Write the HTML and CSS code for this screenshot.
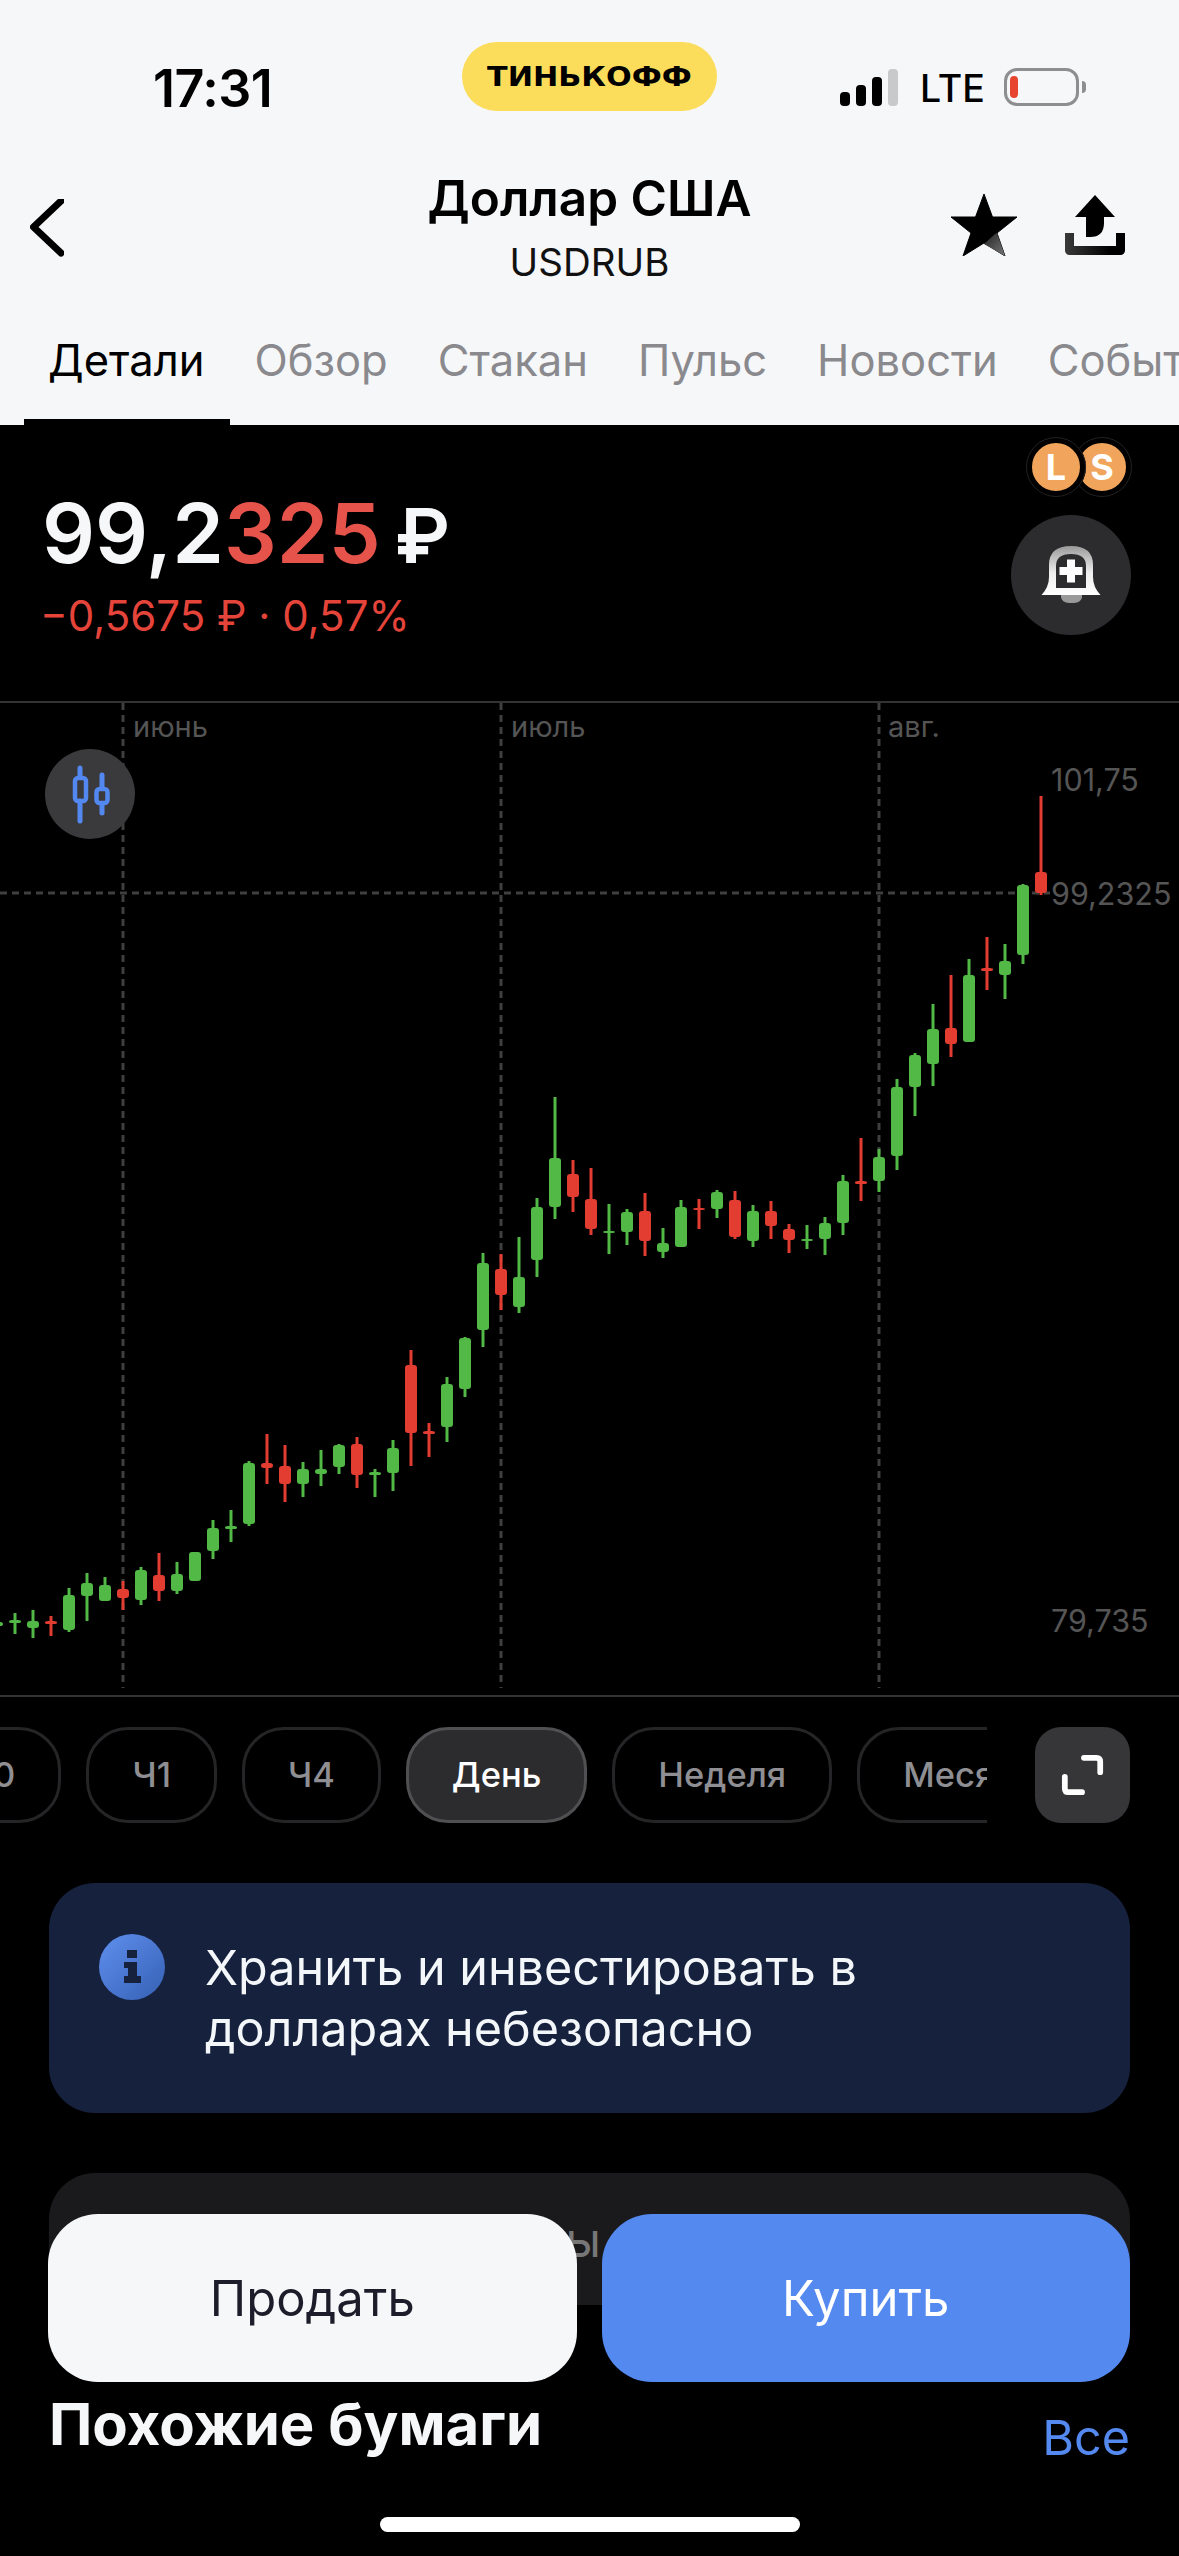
FILE: index.html
```html
<!DOCTYPE html>
<html>
  <head>
    <meta charset="UTF-8">
    <title>Доллар США</title>
    <link rel="stylesheet" href="styles.css">
  </head>

  <body>
    <div id="app">
      <div class="header">
        <div class="status">
          <div class="status__time">17:31</div>
          <div class="status__logo"><span>ТИНЬКОФФ</span></div>
          <div class="status__right">
            <div class="signal">
              <i class="signal__bar signal__bar--1"></i>
              <i class="signal__bar signal__bar--2"></i>
              <i class="signal__bar signal__bar--3"></i>
              <i class="signal__bar signal__bar--4"></i>
            </div>
            <div class="status__net">LTE</div>
            <div class="battery">
              <div class="battery__level"></div>
            </div>
            <div class="battery__nub"></div>
          </div>
        </div>

        <div class="nav">
          <div class="nav__left">
            <svg width="34" height="58" viewBox="0 1 34 58">
              <path d="M31 3 L3.5 29 L31 55" fill="none" stroke="#000" stroke-width="7" stroke-linecap="round" stroke-linejoin="round"/>
            </svg>
          </div>
          <div class="nav__title">
            <div class="nav__name">Доллар США</div>
            <div class="nav__ticker">USDRUB</div>
          </div>
          <div class="nav__actions">
            <svg width="66" height="62" viewBox="951 195 66 62">
              <defs>
                <linearGradient id="starLeg" x1="0" y1="0" x2="1" y2="1">
                  <stop offset="0" stop-color="#222"/>
                  <stop offset="1" stop-color="#777"/>
                </linearGradient>
              </defs>
              <path d="M984 195 L992.500 218 L1017 218 L997 234 L1005 257 L984 244 L963 257 L971 234 L951 218 L975.500 218 Z" fill="#000" stroke="#000" stroke-width="1" stroke-linejoin="round"/>
              <path d="M984 245 L995 235 L997 234 L1005 257 Z" fill="url(#starLeg)"/>
            </svg>
            <svg width="60" height="60" viewBox="1065 194 60 60">
              <defs>
                <linearGradient id="trayFade" gradientUnits="userSpaceOnUse" x1="1065" y1="0" x2="1110" y2="0">
                  <stop offset="0" stop-color="#3a3a3a"/>
                  <stop offset="1" stop-color="#000"/>
                </linearGradient>
              </defs>
              <path d="M1095 194 L1115 216 H1104 V222 Q1104 236 1090 236 H1086 V216 H1075 Z" fill="#000"/>
              <path d="M1069.500 232 V249.500 H1120.500 V232" fill="none" stroke="url(#trayFade)" stroke-width="9" stroke-linejoin="round"/>
            </svg>
          </div>
        </div>

        <div class="tabs">
          <div class="tab tab--active">Детали</div>
          <div class="tab">Обзор</div>
          <div class="tab">Стакан</div>
          <div class="tab">Пульс</div>
          <div class="tab">Новости</div>
          <div class="tab">События</div>
        </div>
      </div>

      <div class="quote">
        <div class="quote__left">
          <div class="price">99,2<span class="price__red">325</span><span class="price__cur">₽</span></div>
          <div class="change">−0,5675 ₽ · 0,57%</div>
        </div>
        <div class="quote__right">
          <div class="badges">
            <div class="badge badge--long">L</div>
            <div class="badge badge--short">S</div>
          </div>
          <div class="bell">
            <svg width="60" height="60" viewBox="1041 546 60 60">
              <defs>
                <linearGradient id="bellFade" x1="0" y1="0" x2="0" y2="1">
                  <stop offset="0" stop-color="#9a9a9a"/>
                  <stop offset="0.55" stop-color="#eee"/>
                  <stop offset="1" stop-color="#fff"/>
                </linearGradient>
              </defs>
              <path d="M1061 596 H1082 V598 A8 6 0 0 1 1074 604 H1069 A8 6 0 0 1 1061 598 Z" fill="#999"/>
              <path d="M1041.500 596 Q1049 588 1049 578 V566 Q1049 547 1071 547 Q1093 547 1093 566 V578 Q1093 588 1100.500 596 Z" fill="url(#bellFade)"/>
              <path d="M1056 589 Q1056 586 1056 578 V567 Q1056 555 1071 555 Q1086 555 1086 567 V578 Q1086 586 1086 589 Z" fill="#2c2c2e"/>
              <path d="M1071 560.500 V583.500 M1059.500 572 H1082.500" stroke="#fff" stroke-width="8"/>
            </svg>
          </div>
        </div>
      </div>

      <div class="chart">
        <svg id="chart" class="chart__svg" width="1179" height="992" viewBox="0 703 1179 992">
          <g class="grid">
            <path d="M123 703 V1688"/>
            <path d="M501 703 V1688"/>
            <path d="M879 703 V1688"/>
            <path d="M0 893 H1050"/>
          </g>
          <g id="candles"></g>
          <text class="chart__label" x="133" y="737">июнь</text>
          <text class="chart__label" x="511" y="737">июль</text>
          <text class="chart__label" x="888" y="737">авг.</text>
          <text class="chart__axis" x="1051" y="791">101,75</text>
          <text class="chart__axis" x="1051" y="905">99,2325</text>
          <text class="chart__axis" x="1051" y="1632">79,735</text>
        </svg>
        <div class="chart__type">
          <svg width="60" height="60" viewBox="60 764 60 60">
            <path d="M80 768 V777 M80 801 V821 M102 775 V788 M102 804 V813" fill="none" stroke="#5288f0" stroke-width="5" stroke-linecap="round"/>
            <rect x="75" y="778" width="11" height="23" rx="3" fill="none" stroke="#5288f0" stroke-width="4.500"/>
            <rect x="96.500" y="789" width="11" height="14" rx="3" fill="none" stroke="#5288f0" stroke-width="4.500"/>
          </svg>
        </div>
      </div>

      <div class="periods">
        <div class="periods__list">
          <div class="period period--first">М30</div>
          <div class="period">Ч1</div>
          <div class="period">Ч4</div>
          <div class="period period--active">День</div>
          <div class="period">Неделя</div>
          <div class="period">Месяц</div>
        </div>
        <div class="expand">
          <svg width="44" height="44" viewBox="1059 1753 46 44">
            <path d="M1083 1757 H1096 Q1100 1757 1100 1761 V1772 M1063 1777 V1789 Q1063 1793 1067 1793 H1081" fill="none" stroke="#fff" stroke-width="6" stroke-linecap="round"/>
          </svg>
        </div>
      </div>

      <div class="notice">
        <div class="notice__icon">
          <svg width="66" height="66" viewBox="99 1934 66 66">
            <defs>
              <linearGradient id="infoFade" x1="0" y1="0" x2="1" y2="1">
                <stop offset="0" stop-color="#5f8fee"/>
                <stop offset="1" stop-color="#3560b4"/>
              </linearGradient>
            </defs>
            <circle cx="132" cy="1967" r="33" fill="url(#infoFade)"/>
            <path d="M127 1950 H137 V1958 H127 Z M124 1962 H137 V1976 H141 V1983 H124 V1976 H128 V1968 H124 Z" fill="#16213d"/>
          </svg>
        </div>
        <div class="notice__text">Хранить и инвестировать в долларах небезопасно</div>
      </div>

      <div class="hidden-card">Прогнозы</div>

      <div class="similar">
        <div class="similar__title">Похожие бумаги</div>
        <div class="similar__all">Все</div>
      </div>

      <div class="actions">
        <div class="action action--sell">Продать</div>
        <div class="action action--buy">Купить</div>
      </div>

      <div class="home"></div>
    </div>

    <script src="chart.js"></script>
  </body>
</html>
```

FILE: styles.css
```css
* {
  font-family: 'Inter', 'Noto Sans', sans-serif;
  box-sizing: border-box;
}
html, body {
  margin: 0;
  padding: 0;
  background: #000;
}
#app {
  position: relative;
  width: 1179px;
  height: 2556px;
  overflow: hidden;
  background: #000;
}

.header {
  height: 425px;
  background: #f6f7f9;
  color: #000;
}

.status {
  display: grid;
  grid-template-columns: 462px 255px 1fr;
  padding-top: 42px;
  height: 129px;
}
.status__time {
  padding: 21px 0 0 153px;
  font-size: 52px;
  line-height: 52px;
  font-weight: 600;
  letter-spacing: -0.5px;
}
.status__logo {
  height: 69px;
  border-radius: 35px;
  background: #fbdd5b;
  display: flex;
  align-items: center;
  justify-content: center;
}
.status__logo span {
  font-family: 'DejaVu Sans', sans-serif;
  font-weight: bold;
  font-size: 27px;
  letter-spacing: 0;
  transform: scaleX(1.12);
}
.status__right {
  display: flex;
  align-items: flex-end;
  height: 64px;
  padding-left: 123px;
}
.signal {
  display: flex;
  align-items: flex-end;
  gap: 6px;
}
.signal__bar {
  display: block;
  width: 10px;
  border-radius: 4px;
  background: #000;
}
.signal__bar--1 { height: 14px; }
.signal__bar--2 { height: 21px; }
.signal__bar--3 { height: 29px; }
.signal__bar--4 { height: 37px; background: #c8c9cb; }
.status__net {
  margin-left: 22px;
  font-size: 37.5px;
  line-height: 35px;
  font-weight: 500;
  width: 84px;
}
.battery {
  width: 75px;
  height: 38px;
  border: 3px solid #8e8e90;
  border-radius: 13px;
  padding: 5px 3px;
}
.battery__level {
  width: 8px;
  height: 22px;
  border-radius: 4px;
  background: #e8452f;
}
.battery__nub {
  width: 4px;
  height: 12px;
  margin: 0 0 13px 3px;
  background: #8e8e90;
  border-radius: 0 4px 4px 0;
}

.nav {
  display: grid;
  grid-template-columns: 1fr auto 1fr;
  align-items: center;
  height: 114px;
  margin-top: 42px;
}
.nav__left {
  padding-left: 30px;
  display: flex;
}
.nav__title {
  text-align: center;
}
.nav__name {
  font-size: 49.5px;
  line-height: 56px;
  font-weight: 600;
  margin-top: -2px;
}
.nav__ticker {
  margin-top: 14px;
  font-size: 38.5px;
  line-height: 44px;
  font-weight: 400;
  color: #111;
}
.nav__actions {
  display: flex;
  justify-content: flex-end;
  align-items: center;
  gap: 48px;
  padding: 0 54px 6px 0;
}

.tabs {
  display: flex;
  height: 134px;
  margin-top: 6px;
  padding-left: 24px;
  overflow: hidden;
}
.tab {
  flex: none;
  padding: 0 26px 0 24px;
  line-height: 138px;
  height: 134px;
  font-size: 43.5px;
  color: #8a8a8e;
  border-bottom: 6px solid transparent;
}
.tab--active {
  color: #000;
  border-bottom-color: #000;
}

.quote {
  display: flex;
  justify-content: space-between;
  height: 278px;
  padding: 12px 48px 0 42px;
  border-bottom: 2px solid #333;
}
.quote__left {
  padding-top: 48px;
}
.price {
  font-size: 83px;
  line-height: 96px;
  font-weight: 600;
  color: #f6f7f9;
  white-space: nowrap;
}
.price__red {
  color: #e5534b;
}
.price__cur {
  margin-left: 14px;
  font-size: 76px;
}
.change {
  margin: 9px 0 0 -2px;
  font-size: 42px;
  line-height: 48px;
  color: #e5443a;
}
.quote__right {
  display: flex;
  flex-direction: column;
  align-items: flex-end;
}
.badges {
  display: flex;
  height: 60px;
  margin-right: -1px;
}
.badge {
  position: relative;
  width: 60px;
  height: 60px;
  border-radius: 50%;
  border: 6px solid #000;
  outline: 1px solid #222;
  outline-offset: -1px;
  background: #f0a45c;
  color: #fff;
  font-size: 36px;
  font-weight: 700;
  line-height: 48px;
  text-align: center;
}
.badge--long {
  z-index: 1;
}
.badge--short {
  margin-left: -14px;
}
.bell {
  width: 120px;
  height: 120px;
  margin-top: 18px;
  border-radius: 50%;
  background: #2c2c2e;
  display: flex;
  align-items: center;
  justify-content: center;
}

.chart {
  position: relative;
  height: 994px;
  border-bottom: 2px solid #333;
}
.chart__svg {
  display: block;
}
.grid path {
  fill: none;
  stroke: #3f3f3f;
  stroke-width: 3;
  stroke-dasharray: 7 5;
}
.wick {
  stroke-width: 3;
}
.up {
  fill: #52b947;
  stroke: #52b947;
}
.down {
  fill: #e33d32;
  stroke: #e33d32;
}
.up rect, .down rect {
  stroke: none;
}
.chart__label {
  font-size: 29px;
  fill: #555;
}
.chart__axis {
  font-size: 30.5px;
  fill: #555;
}
.chart__type {
  position: absolute;
  left: 45px;
  top: 46px;
  width: 90px;
  height: 90px;
  border-radius: 50%;
  background: #3a3a3c;
  display: flex;
  align-items: center;
  justify-content: center;
}

.periods {
  display: flex;
  justify-content: space-between;
  margin-top: 30px;
  padding-right: 49px;
}
.periods__list {
  display: flex;
  gap: 25px;
  width: 987px;
  overflow: hidden;
}
.period {
  flex: none;
  height: 96px;
  padding: 0 43px;
  border: 3px solid #252527;
  border-radius: 42px;
  color: #8e8e93;
  font-size: 34.5px;
  line-height: 90px;
  font-weight: 500;
}
.period--first {
  margin-left: -106px;
}
.period--active {
  background: #2c2c2e;
  border-color: #505052;
  color: #fff;
}
.expand {
  width: 95px;
  height: 96px;
  border-radius: 26px;
  background: #363638;
  display: flex;
  align-items: center;
  justify-content: center;
}

.notice {
  display: flex;
  align-items: flex-start;
  height: 230px;
  margin: 60px 49px 0;
  padding: 51px 48px 0 50px;
  border-radius: 46px;
  background: #16213d;
}
.notice__icon {
  flex: none;
  width: 66px;
  height: 66px;
}
.notice__text {
  margin-left: 40px;
  width: 700px;
  font-size: 48.5px;
  line-height: 61px;
  color: #f4f7fa;
  margin-top: 3px;
}

.hidden-card {
  height: 132px;
  margin: 60px 49px 0;
  padding: 38px 0 0 320px;
  border-radius: 46px 46px 0 0;
  background: #1a1a1c;
  color: #777;
  font-size: 48px;
  line-height: 58px;
}

.similar {
  display: flex;
  justify-content: space-between;
  margin-top: 87px;
  padding: 0 49px 0 49px;
}
.similar__title {
  font-size: 58px;
  line-height: 64px;
  font-weight: 700;
  color: #f6f7f9;
}
.similar__all {
  margin-top: 14px;
  font-size: 48.5px;
  line-height: 64px;
  color: #5489f0;
}

.actions {
  position: absolute;
  left: 48px;
  top: 2214px;
  width: 1082px;
  display: flex;
  gap: 25px;
}
.action {
  height: 168px;
  flex: 1;
  border-radius: 50px;
  font-size: 49px;
  line-height: 170px;
  text-align: center;
}
.action--sell {
  background: #f6f7f9;
  color: #1c1c2a;
}
.action--buy {
  background: #5489f0;
  color: #fff;
}

.home {
  position: absolute;
  left: 380px;
  top: 2517px;
  width: 420px;
  height: 15px;
  border-radius: 8px;
  background: #fff;
}
```

FILE: chart.js
```js
// x, wick top, body top, body bottom, wick bottom, 'u' or 'd' (page pixels)
const candles = [
  [1041, 796, 872, 893, 895, 'd'], [1023, 884, 885, 955, 964, 'u'],
  [1005, 944, 961, 975, 999, 'u'], [987, 937, 968, 971, 990, 'd'],
  [969, 959, 975, 1042, 1042, 'u'], [951, 975, 1028, 1044, 1057, 'd'],
  [933, 1004, 1029, 1064, 1086, 'u'], [915, 1053, 1055, 1087, 1116, 'u'],
  [897, 1079, 1087, 1156, 1170, 'u'], [879, 1149, 1157, 1181, 1192, 'u'],
  [861, 1138, 1181, 1184, 1201, 'd'], [843, 1175, 1181, 1223, 1235, 'u'],
  [825, 1217, 1223, 1239, 1255, 'u'], [807, 1225, 1239, 1241, 1249, 'u'],
  [789, 1224, 1229, 1240, 1253, 'd'], [771, 1201, 1211, 1226, 1239, 'd'],
  [753, 1205, 1211, 1241, 1247, 'u'], [735, 1191, 1200, 1237, 1239, 'd'],
  [717, 1190, 1192, 1209, 1218, 'u'], [699, 1199, 1208, 1210, 1229, 'd'],
  [681, 1200, 1207, 1247, 1247, 'u'], [663, 1228, 1243, 1252, 1258, 'u'],
  [645, 1193, 1211, 1241, 1256, 'd'], [627, 1209, 1212, 1232, 1245, 'u'],
  [609, 1204, 1231, 1233, 1254, 'u'], [591, 1168, 1199, 1229, 1235, 'd'],
  [573, 1160, 1174, 1197, 1212, 'd'], [555, 1097, 1158, 1207, 1219, 'u'],
  [537, 1198, 1207, 1260, 1277, 'u'], [519, 1237, 1277, 1307, 1313, 'u'],
  [501, 1254, 1269, 1295, 1310, 'd'], [483, 1253, 1263, 1330, 1347, 'u'],
  [465, 1337, 1338, 1389, 1397, 'u'], [447, 1377, 1384, 1427, 1442, 'u'],
  [429, 1423, 1431, 1434, 1457, 'd'], [411, 1350, 1365, 1433, 1466, 'd'],
  [393, 1440, 1448, 1473, 1491, 'u'], [375, 1469, 1472, 1475, 1497, 'u'],
  [357, 1437, 1444, 1475, 1488, 'd'], [339, 1444, 1445, 1467, 1474, 'u'],
  [321, 1450, 1469, 1474, 1486, 'u'], [303, 1462, 1469, 1484, 1497, 'u'],
  [285, 1445, 1466, 1484, 1502, 'd'], [267, 1434, 1463, 1468, 1484, 'd'],
  [249, 1461, 1463, 1524, 1526, 'u'], [231, 1510, 1526, 1529, 1542, 'u'],
  [213, 1520, 1528, 1551, 1559, 'u'], [195, 1552, 1552, 1581, 1581, 'u'],
  [177, 1562, 1574, 1591, 1594, 'u'], [159, 1553, 1575, 1591, 1601, 'd'],
  [141, 1567, 1570, 1600, 1605, 'u'], [123, 1581, 1589, 1598, 1610, 'd'],
  [105, 1577, 1585, 1601, 1601, 'u'], [87, 1573, 1583, 1596, 1621, 'u'],
  [69, 1588, 1595, 1630, 1632, 'u'], [51, 1616, 1621, 1624, 1636, 'd'],
  [33, 1610, 1621, 1628, 1638, 'u'], [15, 1613, 1620, 1623, 1634, 'u'],
  [-3, 1620, 1622, 1626, 1632, 'u']
];

let markup = '';
candles.forEach(c => {
  const [x, wickTop, top, bottom, wickBottom, dir] = c;
  markup += '<g class="' + (dir === 'u' ? 'up' : 'down') + '">'
    + '<path class="wick" d="M' + x + ' ' + wickTop + 'V' + wickBottom + '"/>'
    + '<rect x="' + (x - 6) + '" y="' + top + '" width="12" height="' + (bottom - top) + '" rx="3"/>'
    + '</g>';
});
document.getElementById('candles').innerHTML = markup;
```
